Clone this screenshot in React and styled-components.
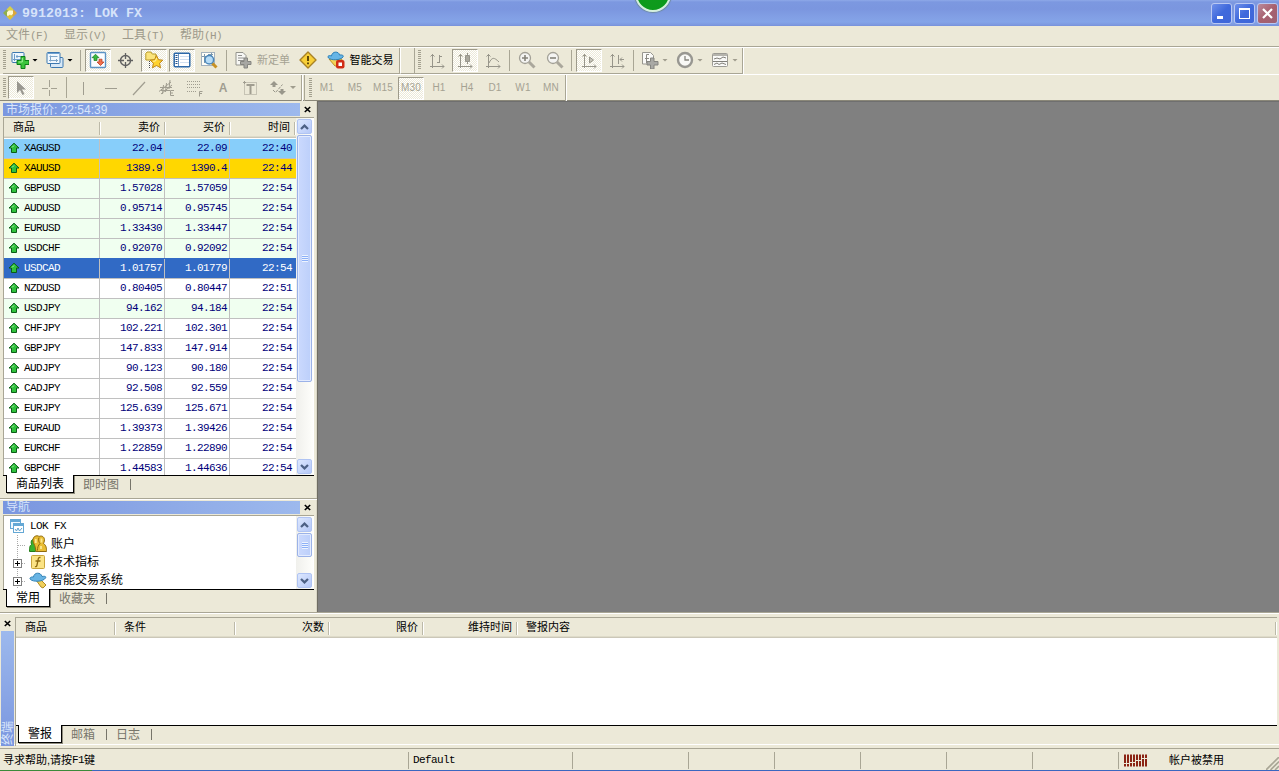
import React from 'react';
import styled, { createGlobalStyle } from 'styled-components';

const GlobalStyle = createGlobalStyle`
  * { box-sizing: border-box; }
  body {
    margin: 0;
    overflow: hidden;
    background: #ece9d8;
    font-family: "Liberation Sans", "Noto Sans CJK SC", sans-serif;
    font-size: 12px;
    line-height: 1;
    color: #000;
    cursor: default;
  }
  svg { display: block; flex: none; }
`;

const Window = styled.div`
  display: flex;
  flex-direction: column;
  width: 1279px;
  height: 771px;
  background: #ece9d8;
  white-space: nowrap;
`;
const Mono = styled.span`
  font-family: "Liberation Mono", monospace;
  font-size: 11px;
  letter-spacing: -0.6px;
`;

/* title bar and menu */
const TitleBar = styled.header`
  position: relative;
  display: flex;
  align-items: center;
  flex: none;
  height: 26px;
  padding: 0 1px 0 3px;
  background: linear-gradient(#8ea9e8 0, #7c98e0 2px, #7b96df 9px, #819ee4 16px, #84a4e8 22px, #7d98df 25px, #7690da 26px);
`;
const TitleText = styled.h1`
  flex: 1;
  margin: 1px 0 0 5px;
  font: bold 13.33px/25px "Liberation Mono", monospace;
  color: #d6e3fa;
`;
const WinButton = styled.div`
  display: flex;
  align-items: center;
  justify-content: center;
  width: 21px;
  height: 21px;
  margin-left: 2px;
  border: 1px solid #b9c8f3;
  border-radius: 3px;
  background: ${p => p.$close
    ? 'linear-gradient(135deg, #b98b9c, #a8606f 50%, #9c6274)'
    : 'linear-gradient(135deg, #6f90ea, #3f69dc 50%, #3f66d8)'};
`;
const Ball = styled.div`
  position: absolute;
  left: 635px;
  top: -24px;
  width: 36px;
  height: 36px;
  border: 2px solid #d5f0dc;
  border-radius: 50%;
  background: radial-gradient(circle at 50% 70%, #0f9a1d, #0b9a1a 60%, #1fa832);
  box-shadow: 0 0 1px 1px #6d8a9c;
`;
const Menu = styled.nav`
  display: flex;
  flex: none;
  gap: 16px;
  height: 22px;
  padding: 3px 6px 0;
  border-bottom: 1px solid #fff;
  box-shadow: inset 0 -1px #a9a695;
  color: #9d9a8b;
`;
const MenuItem = styled.div`
  width: 42px;
  line-height: 13px;
`;

/* toolbars */
const Toolbar = styled.div`
  display: flex;
  flex: none;
  height: ${p => p.$last ? 26 : 27}px;
  padding-left: 3px;
  border-bottom: 1px solid ${p => p.$last ? '#8a8778' : '#fff'};
`;
const BarGroup = styled.div`
  display: flex;
  align-items: center;
  height: 26px;
  padding-bottom: 1px;
  border-right: 1px solid #a9a695;
  border-bottom: ${p => p.$open ? 0 : '1px solid #a9a695'};
  box-shadow: 1px 0 #fff;
`;
const Handle = styled.div`
  width: 3px;
  height: 20px;
  margin: 0 ${p => p.$r ?? 1}px 0 ${p => p.$l ?? 0}px;
  background: repeating-linear-gradient(#a3a08f 0 1px, #ece9d8 1px 2px);
`;
const Gap = styled.div`
  width: ${p => p.$w}px;
  height: 26px;
  border-right: 1px solid #a9a695;
  border-left: 1px solid #fff;
  border-bottom: ${p => p.$open ? 0 : '1px solid #a9a695'};
`;
const Slot = styled.div`
  display: flex;
  align-items: center;
  justify-content: center;
  width: ${p => p.$w || 28}px;
  height: 25px;
  gap: ${p => p.$gap || 0}px;
  font-size: 11px;
  color: ${p => p.$off ? '#a5a293' : '#000'};
`;
const Period = styled(Slot)`
  padding-top: 1px;
  font-size: 10px;
  letter-spacing: 0.2px;
  color: #a5a293;
`;
const Pressed = styled.div`
  display: flex;
  align-items: center;
  justify-content: center;
  width: 26px;
  height: 23px;
  border: 1px solid;
  border-color: #9d9a8b #fff #fff #9d9a8b;
  background: repeating-conic-gradient(#fff 0 25%, #ece9d8 0 50%) 0 0 / 2px 2px;
`;
const Sep = styled.div`
  width: 1px;
  height: 21px;
  margin: 0 ${p => p.$r ?? 3}px 0 3px;
  background: #a9a695;
`;
const Caret = styled.i`
  width: 6px;
  height: 3px;
  margin-left: 3px;
  background: ${p => p.$off ? '#a09d8e' : '#000'};
  clip-path: polygon(0 0, 100% 0, 50% 100%);
`;

/* docked panels */
const Main = styled.div`
  display: flex;
  flex: none;
  height: 511px;
`;
const Dock = styled.aside`
  display: flex;
  flex-direction: column;
  width: 318px;
  padding-top: 2px;
  border-right: 1px solid #6f6d63;
  box-shadow: inset -1px 0 #d9d6c6;
`;
const Workspace = styled.main`
  flex: 1;
  background: #808080;
  border-top: 1px solid #6f6f6f;
`;
const Panel = styled.section`
  display: flex;
  flex: none;
  flex-direction: column;
  height: ${p => p.$h}px;
  padding: 0 3px;
`;
const Divider = styled.div`
  height: 2px;
  border-top: 1px solid #a9a695;
  border-bottom: 1px solid #fff;
  margin-bottom: 1px;
`;
const Caption = styled.div`
  display: flex;
  align-items: center;
  height: 13px;
  justify-content: space-between;
`;
const CaptionText = styled.div`
  width: 297px;
  height: 13px;
  padding-left: 3px;
  overflow: hidden;
  background: linear-gradient(90deg, #7a96df, #9db9ed);
  color: #d8e5fb;
  font-size: 12px;
  line-height: ${p => p.$lh || 12}px;
`;
const CloseMark = styled.div`
  width: 13px;
  display: flex;
  justify-content: center;
`;
const Frame = styled.div`
  display: flex;
  height: ${p => p.$h}px;
  margin-top: 1px;
  overflow: hidden;
  border-top: 1px solid #a9a695;
  border-left: 1px solid #a9a695;
  background: #fff;
`;
const Quotes = styled.div`
  width: 292px;
`;
const HeadRow = styled.div`
  display: grid;
  grid-template-columns: 96px 65px 65px 1fr;
  align-items: center;
  height: 20px;
  margin-bottom: 1px;
  padding-left: 1px;
  background: #ece9d8;
  box-shadow: inset 0 -1px #cbc7b8, inset 0 -2px #dedbc9;
`;
const HeadCell = styled.div`
  height: 13px;
  padding: 0 5px 0 8px;
  font-size: 11px;
  line-height: 11px;
  text-align: ${p => p.$left ? 'left' : 'right'};
  border-right: 1px solid #fff;
  box-shadow: inset -1px 0 #bcb9a8;
`;
const Row = styled.div`
  display: grid;
  grid-template-columns: 96px 65px 65px 1fr;
  height: 20px;
  background: ${p => p.$bg};
  color: ${p => p.$sel ? '#fff' : '#00007a'};
  border-bottom: 1px solid #c0c0c0;
  box-shadow: ${p => p.$sel ? '0 -1px #316ac5' : 'none'};
`;
const Cell = styled.div`
  display: flex;
  align-items: center;
  justify-content: ${p => p.$sym ? 'flex-start' : 'flex-end'};
  gap: 4px;
  padding: 0 ${p => p.$pad ?? 2}px 2px 4px;
  border-right: ${p => p.$pad ? 0 : '1px solid #c0c0c0'};
  font: 11px "Liberation Mono", monospace;
  letter-spacing: -0.6px;
  color: ${p => p.$sym && !p.$sel ? '#000' : 'inherit'};
`;
const Scroll = styled.div`
  display: flex;
  flex-direction: column;
  align-items: center;
  width: 17px;
  padding: 1px 0;
  background: linear-gradient(90deg, #f0f0ec, #fefefb);
`;
const ScrollButton = styled.div`
  display: flex;
  align-items: center;
  justify-content: center;
  width: 15px;
  height: 15px;
  flex: none;
  border: 1px solid #b0c4f3;
  border-radius: 2px;
  background: linear-gradient(135deg, #dce7fe, #b6c9f8);
  margin-top: ${p => p.$end ? 'auto' : 0};
`;
const Thumb = styled.div`
  display: flex;
  align-items: center;
  justify-content: center;
  width: 15px;
  height: ${p => p.$h}px;
  margin-top: 1px;
  border: 1px solid #9bb2e8;
  border-radius: 2px;
  box-shadow: inset 0 0 0 1px #e3ebfe;
  background: linear-gradient(90deg, #cbd9fd, #bccffa);
`;
const Grip = styled.div`
  width: 6px;
  height: 7px;
  background: repeating-linear-gradient(#eef4fe 0 1px, #8cb0f8 1px 2px);
`;
const Tabs = styled.div`
  display: flex;
  height: 19px;
  padding-left: ${p => p.$x ?? 3}px;
  border-top: 1px solid #000;
`;
const Tab = styled.div`
  height: 18px;
  padding: ${p => p.$on ? '0 9px' : '2px 0 0 9px'};
  margin-top: ${p => p.$on ? -1 : 0}px;
  line-height: ${p => p.$on ? 18 : 14}px;
  color: ${p => p.$on ? '#000' : '#77756a'};
  background: ${p => p.$on ? '#fff' : 'none'};
  border: ${p => p.$on ? '1px solid #000' : 0};
  border-top: 0;
  box-shadow: ${p => p.$on ? '1px 1px #8f8c7d' : 'none'};
`;
const TabBar = styled.i`
  width: 1px;
  height: 11px;
  margin: 3px 0 0 11px;
  background: #77756a;
`;
const Tree = styled.div`
  width: 292px;
  padding: 1px 0 0 5px;
`;
const TreeRow = styled.div`
  display: flex;
  align-items: center;
  height: 18px;
  gap: ${p => p.$root ? 5 : 4}px;
`;

/* terminal */
const Terminal = styled.section`
  display: flex;
  flex: none;
  height: 137px;
  padding: 4px 2px 2px 1px;
  border-top: 1px solid #a9a695;
  border-bottom: 1px solid #a9a695;
  box-shadow: inset 0 1px #fff, inset 0 -3px #ece9d8, inset 0 -4px #fff;
`;
const SideStrip = styled.div`
  display: flex;
  flex-direction: column;
  width: 14px;
  padding-top: 3px;
  gap: 4px;
`;
const SideClose = styled.div`
  padding-left: 3px;
`;
const SideTitle = styled.div`
  width: 13px;
  height: 115px;
  padding-top: 1px;
  padding-right: 1px;
  writing-mode: vertical-rl;
  text-orientation: sideways;
  transform: rotate(180deg);
  background: linear-gradient(0deg, #9db9ed, #7a96df);
  color: #d8e5fb;
  font-size: 12px;
  line-height: 12px;
`;
const TermBody = styled.div`
  flex: 1;
  display: flex;
  flex-direction: column;
  border-top: 1px solid #a9a695;
  border-left: 1px solid #a9a695;
`;
const TermHead = styled(HeadRow)`
  grid-template-columns: 99px 120px 94px 94px 94px 1fr;
  margin-bottom: 0;
`;
const TermList = styled.div`
  height: 87px;
  background: #fff;
`;

/* status bar */
const Status = styled.footer`
  display: flex;
  flex: 1;
  position: relative;
  padding-top: 3px;
  border-bottom: 1px solid #3a67c0;
  border-image: linear-gradient(90deg, #3b8a3a 93px, #3a67c0 93px) 1;
`;
const StatusCell = styled.div`
  display: flex;
  align-items: center;
  width: ${p => p.$w}px;
  height: 17px;
  padding-left: ${p => p.$l ?? 4}px;
  font-size: 11px;
  border-right: ${p => p.$end ? 0 : '1px solid #a9a695'};
`;
const Size = styled.div`
  position: absolute;
  right: 0;
  bottom: 0;
`;

const Icon = ({ w = 18, h = 18, children, ...rest }) => (
  <svg width={w} height={h} viewBox={`0 0 ${w} ${h}`} fill="none" {...rest}>{children}</svg>
);

const UpArrow = () => (
  <Icon w={12} h={12}>
    <path d="M6 1.2 11 6H8.5V10.5H3.5V6H1Z" fill="#2fc03c" stroke="#0a5c18" />
    <path d="M4 5.500 6 3.500" stroke="#a5f2a5" />
  </Icon>
);
const CloseX = () => (
  <Icon w={7} h={7}><path d="M.8 1 6.2 6M6.2 1 .8 6" stroke="#000" strokeWidth="1.6" /></Icon>
);
const Chevron = ({ down }) => (
  <Icon w={9} h={6}><path d={down ? 'M1 1 4.5 4.4 8 1' : 'M1 5 4.5 1.6 8 5'} stroke="#4d6185" strokeWidth="2.2" /></Icon>
);
const AppLogo = () => (
  <Icon w={14} h={14}>
    <path d="M7 0 10.500 3.500 7 7 3.500 3.500Z" fill="#d8d04a" />
    <path d="M14 7 10.500 10.500 7 7 10.500 3.500Z" fill="#dba73c" />
    <path d="M7 14 3.500 10.500 7 7 10.500 10.500Z" fill="#dfc138" />
    <path d="M0 7 3.500 3.500 7 7 3.500 10.500Z" fill="#8fae4c" />
    <path d="M4 9.500V6L6 4.500h4V8L8 9.500 7 8.500 5 10Z" fill="#fff9cf" />
  </Icon>
);
const NewChart = () => (
  <Icon>
    <rect x="1" y="1.500" width="12" height="10" rx="1" fill="#edf6fd" stroke="#3c78b0" />
    <path d="M3.500 3v7M2 8.500h9M5 5.500h5M6 4v3" stroke="#6c9cc8" />
    <path d="M10 5.500h4v4h4v4h-4v4h-4v-4H6v-4h4Z" fill="#3cc53c" stroke="#0d8019" />
    <path d="M11.300 7v4H7.500" stroke="#a2f29b" />
  </Icon>
);
const Profiles = () => (
  <Icon>
    <rect x="4.500" y="6.500" width="12.500" height="10" rx="1" fill="#d7e8f6" stroke="#3c78b0" />
    <rect x="1" y="1.500" width="13" height="11" rx="1" fill="#f1f8fe" stroke="#3c78b0" />
    <path d="M1.500 2.500h12" stroke="#6da0d0" />
    <path d="M4.500 4.500v6M3 9.500h9M3.500 5.500h8M10.500 8v3" stroke="#7ca4c8" />
  </Icon>
);
const MarketWatch = () => (
  <Icon>
    <rect x="1.500" y="1.500" width="15" height="15" rx="1" fill="#fbfdff" stroke="#5b93c4" strokeWidth="1.400" />
    <path d="M6.500 3.200 10 6.700H8V9.500H5V6.700H3Z" fill="#39b83d" stroke="#14791c" strokeWidth=".7" />
    <path d="M11.500 14.500 15 11H13V8.200H10V11H8Z" fill="#f0704b" stroke="#b5341a" strokeWidth=".7" />
  </Icon>
);
const Target = () => (
  <Icon stroke="#606060"><circle cx="8.500" cy="9.500" r="5" strokeWidth="1.400" /><path d="M8.500 2v6M8.500 11v6M1 9.500h6M10 9.500h6" strokeWidth="1.300" /></Icon>
);
const Navigator = () => (
  <Icon>
    <path d="M.8 9V2.500L2 1h4l1.200 2H11v6Z" fill="#fbe47c" stroke="#b89a2a" />
    <path d="M4.500 10v7" stroke="#444" strokeDasharray="1 1" />
    <path d="m11.500 4.500 2 4.200 4.300.5-3.200 3 .9 4.600-4-2.300-4 2.300.9-4.600-3.200-3 4.300-.5Z" fill="#ffd22e" stroke="#bd8414" />
    <path d="m11.500 7-.9 3-2.800.3" stroke="#fff2a0" />
  </Icon>
);
const TerminalIcon = () => (
  <Icon>
    <rect x="1.200" y="2.200" width="15.600" height="13.500" rx="1" fill="#fff" stroke="#2c68a8" strokeWidth="1.500" />
    <path d="M3.500 4v10" stroke="#204f88" strokeWidth="2" strokeDasharray="1 1" />
    <path d="M5.500 3v12" stroke="#6a94c2" />
    <path d="M7 5.500h9M7 8.500h9M7 11.500h9" stroke="#d2e0f0" />
  </Icon>
);
const Tester = () => (
  <Icon>
    <rect x="1.500" y="1.500" width="13" height="13" fill="#fffef7" stroke="#a3b1bd" />
    <path d="M4.500 3v9M11.500 2v5M2 5.500h5M8 3.500h5" stroke="#7c98ae" />
    <path d="m12 12 4.500 4.500" stroke="#c89122" strokeWidth="3" />
    <circle cx="9.300" cy="8.800" r="4.300" fill="#b7dcf6" stroke="#4b87ba" strokeWidth="1.500" />
  </Icon>
);
const NewOrder = () => (
  <Icon>
    <path d="M2 1.500h7l3 3V14H2Z" fill="#f7f7f4" stroke="#93938c" />
    <path d="M4 4.500h4M4 7h6M4 9.500h6" stroke="#929290" />
    <path d="M10 7h3.500v3.500h3.500v3h-3.500V17H10v-3.500H6.500v-3H10Z" fill="#a7a7a3" stroke="#858580" />
  </Icon>
);
const Warning = () => (
  <Icon>
    <path d="M9 1 17 9 9 17 1 9Z" fill="#f8cf38" stroke="#a98224" strokeWidth="1.400" strokeLinejoin="round" />
    <path d="M9 5v5M9 11.500v1.800" stroke="#513c04" strokeWidth="1.800" />
  </Icon>
);
const Expert = () => (
  <Icon>
    <path d="M2 8h13l-3 7H8Z" fill="#f4d256" stroke="#bb9226" />
    <path d="M4.500 5C5 0 12 0 12.500 4c3-.3 4.500.5 3.500 2C13.500 9.500 4 9.500 1.500 7 0 5 2 4 4.500 5Z" fill="#66b5e6" stroke="#2d80b7" />
    <rect x="9" y="9" width="8.500" height="8.500" rx="2" fill="#d02c14" /><rect x="11.500" y="11.500" width="3.500" height="3.500" fill="#fff" />
  </Icon>
);
const Axis = <path d="M4.500 3v14M2.500 5.500l2-2 2 2M2 15.500h14M14 13.500l2 2-2 2" />;
const AxisIcon = ({ children }) => <Icon stroke="#97958a">{Axis}{children}</Icon>;
const ZoomIcon = ({ plus }) => (
  <Icon>
    <path d="m11 11 5.500 5.500" stroke="#aaa79c" strokeWidth="3" />
    <circle cx="7" cy="7" r="5.500" fill="#f4f4f2" stroke="#a3a197" strokeWidth="1.300" />
    <path d={plus ? 'M7 4v6M4 7h6' : 'M4 7h6'} stroke="#858379" strokeWidth="1.600" />
  </Icon>
);
const Indicators = () => (
  <Icon>
    <path d="M1.500 1.500h8l3 3V13h-11Z" fill="#fafaf8" stroke="#97968f" />
    <path d="M8 3.500H5.500V12M4 7.500h4" stroke="#8b8a84" />
    <path d="M9.500 7h3.500v3.500h4v3.500h-4v4H9.500v-4H6v-3.500h3.500Z" fill="#a9a9a5" stroke="#858580" />
  </Icon>
);
const Clock = () => (
  <Icon><circle cx="9" cy="9" r="7" fill="#f8f8f5" stroke="#989791" strokeWidth="2.400" /><path d="M9 5v4h4" stroke="#86857e" strokeWidth="1.300" /></Icon>
);
const Template = () => (
  <Icon>
    <rect x="1.500" y="2.500" width="15" height="13" rx="1" fill="#fafaf8" stroke="#9c9b94" />
    <path d="M2 4h14" stroke="#b5b4ad" strokeWidth="2" />
    <path d="M3 8l3-1 3 1 3-2 3 1M2 10.500h14M3 13.500l3-1.500 2 1.500 3-1.500 4 1.500" stroke="#807f79" />
  </Icon>
);
const Cursor = () => <Icon><path d="M5 2v12l3-3 2.500 5 2-1L10 10.500h4Z" fill="#999790" /></Icon>;
const Cross = () => <Icon stroke="#a5a293"><path d="M9.500 1v7M9.500 11v6M2 9.500h6M11 9.500h6" /></Icon>;
const Channel = () => (
  <Icon stroke="#a09d90">
    <path d="M1 12.500 13 3M3 15 14 6M2 8.500h12M3 11.500h9M5.500 6l-1 9M8.500 4l-1 9M12 1l-1 9" />
    <path d="M16 11.500h-3.500v5H16M12.500 14H15" />
  </Icon>
);
const Fibo = () => (
  <Icon stroke="#a09d90"><path d="M1 2.500h14M1 5.500h14M1 8.500h14M1 12.500h10" strokeDasharray="1 1" /><path d="M16.500 12.500H13.500V17.500M13 14.500h3" /></Icon>
);
const TextBox = () => (
  <Icon stroke="#a09d90"><rect x="3.500" y="3.500" width="12" height="12" strokeDasharray="1 1" /><path d="M5.500 6h8M9.500 6V15" strokeWidth="2" /><path d="M2 3.500h3M3.500 2v3" /></Icon>
);
const Arrows = () => (
  <Icon><path d="M5 2 9 6H6.500v2H3.500V6H1ZM13 16l-4-4h2.500v-2h3v2H17Z" fill="#99978b" /><path d="m4 11 2.500 2.500 7-8" stroke="#99978b" strokeDasharray="3 1" /></Icon>
);
const LetterA = styled.span`
  padding-left: 1px;
  font: bold 12px "Liberation Sans", sans-serif;
  color: #a09d90;
`;
const RootIcon = () => (
  <Icon w={16} h={16}>
    <rect x="1.500" y="1.500" width="10" height="9" fill="#eef8ff" stroke="#64a8d5" /><path d="M1.500 3h10" stroke="#64a8d5" strokeWidth="2" />
    <rect x="4.500" y="5.500" width="10" height="9" fill="#fff" stroke="#64a8d5" /><path d="M4.500 7h10" stroke="#64a8d5" strokeWidth="2" />
    <path d="m6 11 1.500 2L9 10l1.500 3L13 10" stroke="#5f9fc9" />
  </Icon>
);
const Accounts = () => (
  <Icon>
    <path d="M.5 16.500c0-5 .5-6 2-7-1-3 0-5 2-5s3 3 2 5v7Z" fill="#38b32e" stroke="#257d18" />
    <path d="M5 9C2.500 4 5 .8 8 .8c1.500 0 2 .7 2 .7 2-1 5-.5 5.500 3 0 2-1 4-1 4 3 2 3 5 3 8H7c-.5-3-1-6-2-7.500Z" fill="#e9bd34" stroke="#8f6a0e" />
    <path d="M10 2.500c-1 2 0 5 1 6-2 2-2.500 4-2.500 7" stroke="#8f6a0e" />
    <path d="M12.500 3.500v4M12 11v3M6.800 4v4" stroke="#fbe894" strokeWidth="1.800" />
  </Icon>
);
const Func = () => (
  <Icon>
    <rect x="2.500" y="2.500" width="13" height="13" rx="1" fill="#fbe384" stroke="#c9a53b" />
    <path d="M11.500 4.500c-2-.5-2.300 1-2.500 3L8 12c-.3 1.500-1 2-2 1.500M6.500 8h5" stroke="#8d6a10" strokeWidth="1.300" />
  </Icon>
);
const Advisor = () => (
  <Icon>
    <path d="m7 9 5 7 2 1 3-3-5-5Z" fill="#f1d05c" stroke="#ae8b26" />
    <path d="M4.500 6C5 1 12 1 13 5.500c3-.5 4.500 0 3.500 1.500C14 11 4 11 1.500 8.500 0 7 2 5.500 4.500 6Z" fill="#68b4e4" stroke="#3283b6" />
  </Icon>
);
const Branch = ({ plus }) => (
  <Icon w={16}>
    <path d="M8.500 0V18M9 10.500h7" stroke="#aaa" strokeDasharray="1 1" />
    {plus && (
      <g>
        <rect x="4.500" y="6.500" width="8" height="8" fill="#fff" stroke="#808080" />
        <path d="M6 10.500h5M8.500 8v5" stroke="#000" />
      </g>
    )}
  </Icon>
);

const GREEN = '#f0fff0';
const quotes = [
  ['XAGUSD', '22.04', '22.09', '22:40', '#87cefa'],
  ['XAUUSD', '1389.9', '1390.4', '22:44', '#ffd700'],
  ['GBPUSD', '1.57028', '1.57059', '22:54', GREEN],
  ['AUDUSD', '0.95714', '0.95745', '22:54', GREEN],
  ['EURUSD', '1.33430', '1.33447', '22:54', GREEN],
  ['USDCHF', '0.92070', '0.92092', '22:54', GREEN],
  ['USDCAD', '1.01757', '1.01779', '22:54', '#316ac5'],
  ['NZDUSD', '0.80405', '0.80447', '22:51', '#fff'],
  ['USDJPY', '94.162', '94.184', '22:54', GREEN],
  ['CHFJPY', '102.221', '102.301', '22:54', '#fff'],
  ['GBPJPY', '147.833', '147.914', '22:54', '#fff'],
  ['AUDJPY', '90.123', '90.180', '22:54', '#fff'],
  ['CADJPY', '92.508', '92.559', '22:54', '#fff'],
  ['EURJPY', '125.639', '125.671', '22:54', '#fff'],
  ['EURAUD', '1.39373', '1.39426', '22:54', '#fff'],
  ['EURCHF', '1.22859', '1.22890', '22:54', '#fff'],
  ['GBPCHF', '1.44583', '1.44636', '22:54', '#fff'],
];
const menus = [['文件', '(F)'], ['显示', '(V)'], ['工具', '(T)'], ['帮助', '(H)']];
const periods = ['M1', 'M5', 'M15', 'M30', 'H1', 'H4', 'D1', 'W1', 'MN'];

const ScrollBar = ({ thumb }) => (
  <Scroll>
    <ScrollButton><Chevron /></ScrollButton>
    <Thumb $h={thumb}><Grip /></Thumb>
    <ScrollButton $end><Chevron down /></ScrollButton>
  </Scroll>
);

function StandardBar() {
  return (
    <Toolbar>
      <BarGroup>
        <Handle />
        <Slot $w={35}><NewChart /><Caret /></Slot>
        <Slot $w={35}><Profiles /><Caret /></Slot>
        <Sep />
        <Slot><Pressed><MarketWatch /></Pressed></Slot>
        <Slot><Target /></Slot>
        <Slot><Pressed><Navigator /></Pressed></Slot>
        <Slot $w={27}><Pressed><TerminalIcon /></Pressed></Slot>
        <Slot><Tester /></Slot>
        <Sep />
        <Slot $w={64} $gap={5} $off><NewOrder />新定单</Slot>
        <Slot $w={27}><Warning /></Slot>
        <Slot $w={78} $gap={5}><Expert />智能交易</Slot>
      </BarGroup>
      <Gap $w={15} />
      <BarGroup>
        <Handle $l={3} $r={2} />
        <Slot><AxisIcon><path d="M11.500 4v8M9 11.500h2.500M11.500 5.500H14" /></AxisIcon></Slot>
        <Slot><Pressed><AxisIcon><path d="M11.500 2v11" /><path d="M9.500 4.500h4v6h-4Z" fill="#aaa89d" /></AxisIcon></Pressed></Slot>
        <Slot $w={27}><AxisIcon><path d="M5 12c3-6 5-6 10-1" /></AxisIcon></Slot>
        <Sep />
        <Slot><ZoomIcon plus /></Slot>
        <Slot $w={27}><ZoomIcon /></Slot>
        <Sep />
        <Slot><Pressed><AxisIcon><path d="M9.500 6v6l4-3Z" fill="#c5c3b8" /></AxisIcon></Pressed></Slot>
        <Slot $w={27}><AxisIcon><path d="M10.500 4v9M16 8.500h-4M14 6.500l-2 2 2 2" /></AxisIcon></Slot>
        <Sep />
        <Slot $w={35}><Indicators /><Caret $off /></Slot>
        <Slot $w={35}><Clock /><Caret $off /></Slot>
        <Slot $w={35}><Template /><Caret $off /></Slot>
      </BarGroup>
    </Toolbar>
  );
}

function LineBar() {
  return (
    <Toolbar $last>
      <BarGroup $open>
        <Handle />
        <Slot><Pressed><Cursor /></Pressed></Slot>
        <Slot><Cross /></Slot>
        <Sep $r={2} />
        <Slot><Icon stroke="#a09d90"><path d="M9.500 3v13" /></Icon></Slot>
        <Slot><Icon stroke="#a09d90"><path d="M3 9.500h12" /></Icon></Slot>
        <Slot><Icon stroke="#a09d90"><path d="M3 16 15 3" strokeWidth="1.200" /></Icon></Slot>
        <Slot><Channel /></Slot>
        <Slot><Fibo /></Slot>
        <Slot $w={27}><LetterA>A</LetterA></Slot>
        <Slot><TextBox /></Slot>
        <Slot $w={37}><Arrows /><Caret $off /></Slot>
      </BarGroup>
      <Gap $w={3} $open />
      <BarGroup $open>
        <Handle $l={4} />
        {periods.map(p => (
          <Period key={p}>{p === 'M30' ? <Pressed>{p}</Pressed> : p}</Period>
        ))}
      </BarGroup>
    </Toolbar>
  );
}

function MarketPanel() {
  return (
    <Panel $h={395}>
      <Caption>
        <CaptionText $lh={14}>市场报价: 22:54:39</CaptionText>
        <CloseMark><CloseX /></CloseMark>
      </Caption>
      <Frame $h={358}>
        <Quotes>
          <HeadRow>
            <HeadCell $left>商品</HeadCell>
            <HeadCell>卖价</HeadCell>
            <HeadCell>买价</HeadCell>
            <HeadCell>时间</HeadCell>
          </HeadRow>
          {quotes.map(([sym, bid, ask, time, bg]) => {
            const sel = sym === 'USDCAD';
            return (
              <Row key={sym} $bg={bg} $sel={sel}>
                <Cell $sym $sel={sel}><UpArrow />{sym}</Cell>
                <Cell>{bid}</Cell>
                <Cell>{ask}</Cell>
                <Cell $pad={4}>{time}</Cell>
              </Row>
            );
          })}
        </Quotes>
        <ScrollBar thumb={247} />
      </Frame>
      <Tabs>
        <Tab $on>商品列表</Tab>
        <Tab>即时图</Tab>
        <TabBar />
      </Tabs>
    </Panel>
  );
}

function NavigatorPanel() {
  return (
    <Panel $h={111}>
      <Caption>
        <CaptionText>导航</CaptionText>
        <CloseMark><CloseX /></CloseMark>
      </Caption>
      <Frame $h={74}>
        <Tree>
          <TreeRow $root><RootIcon /><Mono>LOK FX</Mono></TreeRow>
          <TreeRow><Branch /><Accounts />账户</TreeRow>
          <TreeRow><Branch plus /><Func />技术指标</TreeRow>
          <TreeRow><Branch plus /><Advisor />智能交易系统</TreeRow>
        </Tree>
        <ScrollBar thumb={24} />
      </Frame>
      <Tabs>
        <Tab $on>常用</Tab>
        <Tab>收藏夹</Tab>
        <TabBar />
      </Tabs>
    </Panel>
  );
}

function App() {
  return (
    <Window>
      <GlobalStyle />
      <TitleBar>
        <AppLogo />
        <TitleText>9912013: LOK FX</TitleText>
        <Ball />
        <WinButton><Icon w={13} h={13}><path d="M2 10.500h6" stroke="#fff" strokeWidth="3" /></Icon></WinButton>
        <WinButton><Icon w={13} h={13}><rect x="1.500" y="1.500" width="10" height="10" stroke="#fff" /><path d="M1 2h11" stroke="#fff" strokeWidth="2" /></Icon></WinButton>
        <WinButton $close><Icon w={13} h={13}><path d="m2 2 9 9M11 2l-9 9" stroke="#fff" strokeWidth="2.200" /></Icon></WinButton>
      </TitleBar>
      <Menu>
        {menus.map(([name, key]) => (
          <MenuItem key={key}>{name}<Mono>{key}</Mono></MenuItem>
        ))}
      </Menu>
      <StandardBar />
      <LineBar />
      <Main>
        <Dock>
          <MarketPanel />
          <Divider />
          <NavigatorPanel />
        </Dock>
        <Workspace />
      </Main>
      <Terminal>
        <SideStrip>
          <SideClose><CloseX /></SideClose>
          <SideTitle>终端</SideTitle>
        </SideStrip>
        <TermBody>
          <TermHead>
            <HeadCell $left>商品</HeadCell>
            <HeadCell $left>条件</HeadCell>
            <HeadCell>次数</HeadCell>
            <HeadCell>限价</HeadCell>
            <HeadCell>维持时间</HeadCell>
            <HeadCell $left>警报内容</HeadCell>
          </TermHead>
          <TermList />
          <Tabs $x={2}>
            <Tab $on>警报</Tab>
            <Tab>邮箱</Tab>
            <TabBar />
            <Tab>日志</Tab>
            <TabBar />
          </Tabs>
        </TermBody>
      </Terminal>
      <Status>
        <StatusCell $w={409} $l={3}>寻求帮助,请按<Mono>F1</Mono>键</StatusCell>
        <StatusCell $w={164}><Mono>Default</Mono></StatusCell>
        <StatusCell $w={116} />
        <StatusCell $w={86} />
        <StatusCell $w={86} />
        <StatusCell $w={86} />
        <StatusCell $w={86} />
        <StatusCell $w={86} />
        <StatusCell $w={46} $l={5} $end>
          <Icon w={24} h={13}>
            <path d="M0 6.500h24" stroke="#8b2414" strokeWidth="12" strokeDasharray="2 1" />
            <path d="M0 9.500h6M6 8.500h6M12 6.500h6M18 4.500h6" stroke="#ece9d8" />
          </Icon>
        </StatusCell>
        <StatusCell $w={100} $end>帐户被禁用</StatusCell>
        <Size>
          <Icon w={13} h={13} stroke="#a9a695" strokeWidth="1.600"><path d="M0 13 13 0M4.500 13 13 4.500M9 13l4-4" /></Icon>
        </Size>
      </Status>
    </Window>
  );
}
export default App;
